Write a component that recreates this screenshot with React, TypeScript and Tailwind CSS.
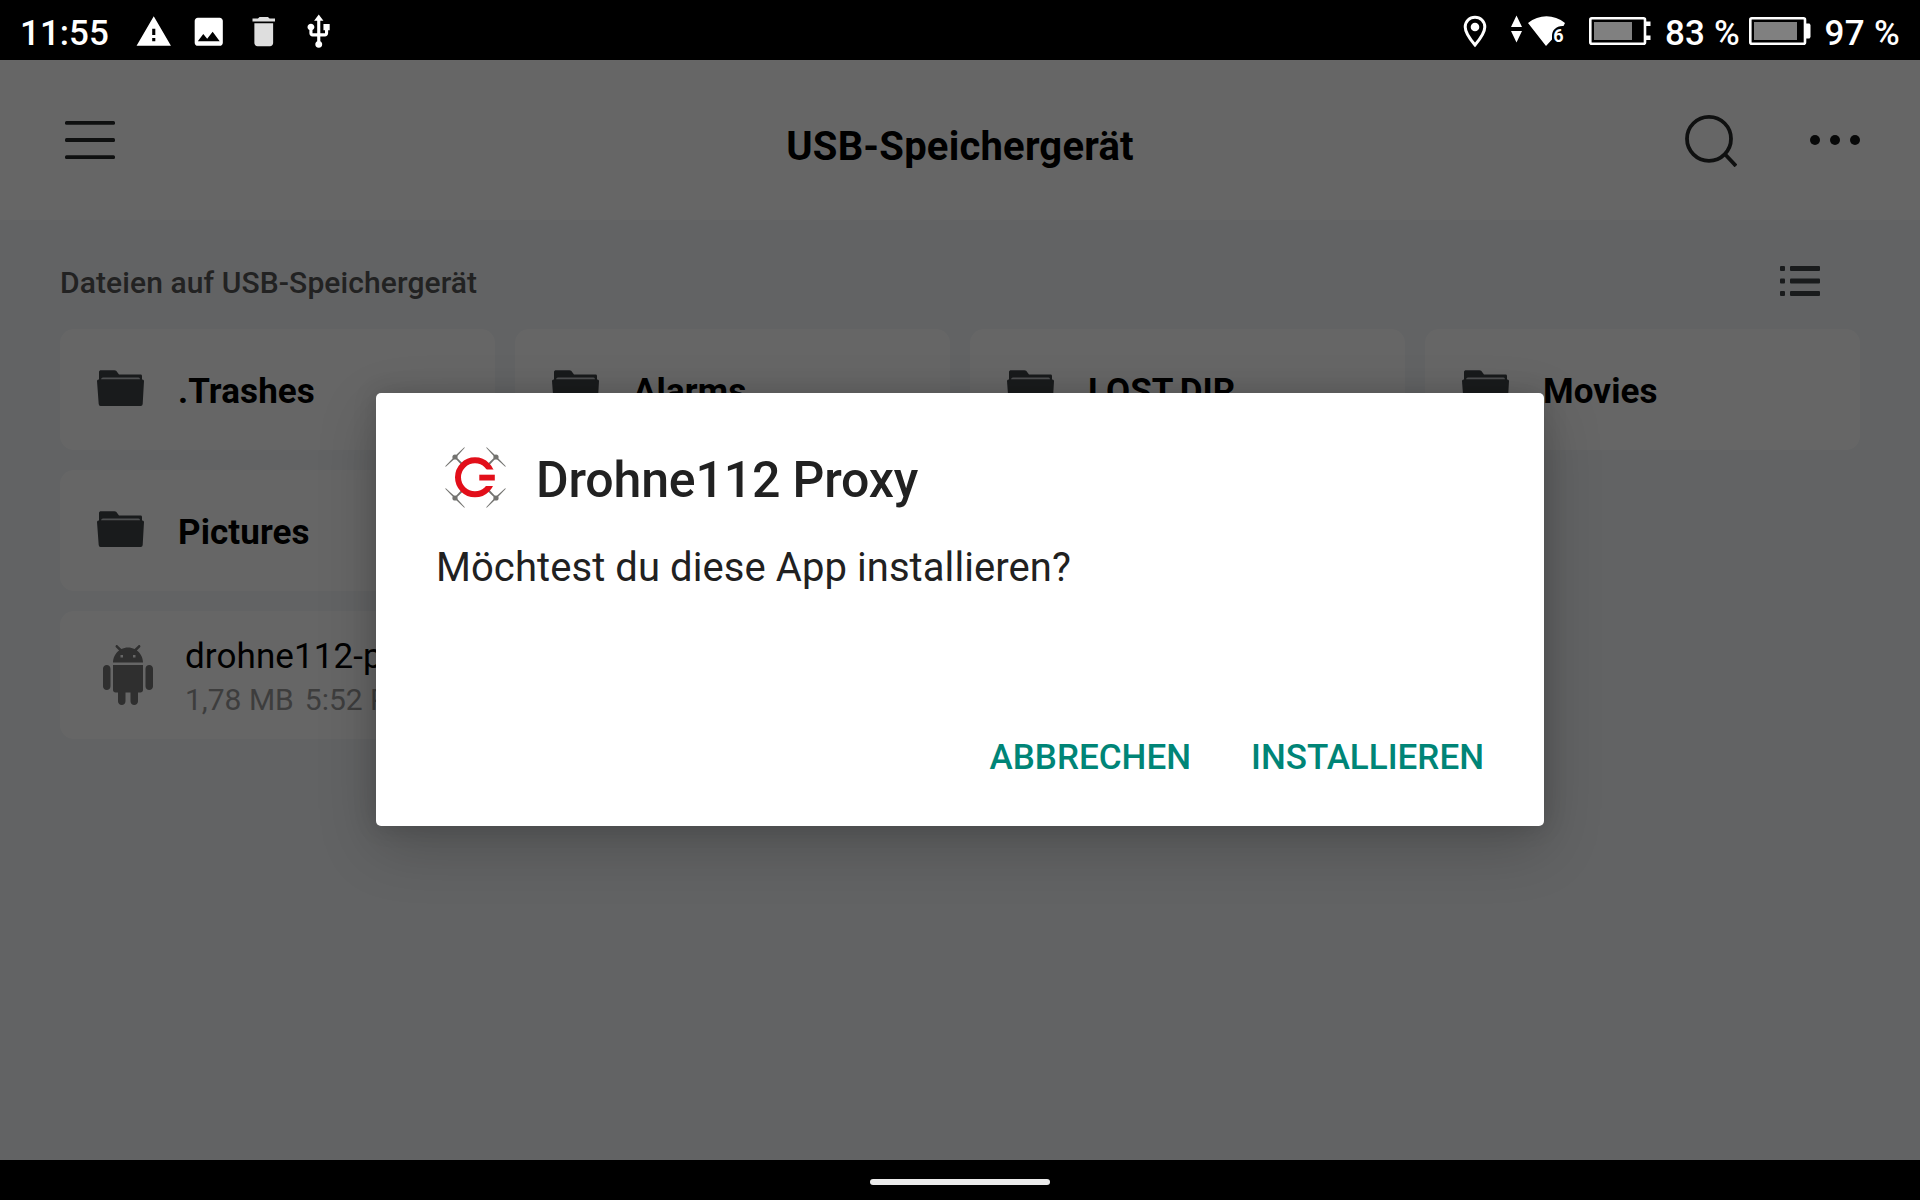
import clsx from 'clsx'
import {MdImage, MdUsb, MdWarning} from 'react-icons/md'

const folders = ['.Trashes', 'Alarms', 'LOST.DIR', 'Movies', 'Pictures']

function StatusBar() {
  return (
    <header className="flex h-[60px] shrink-0 items-start justify-between bg-black pl-5 pr-[19px] text-white">
      <div className="flex items-start">
        <span className="w-[115.4px] text-[35px] font-medium leading-[68px]">11:55</span>
        <div className="flex gap-[17.3px] pt-[12.5px]">
          <MdWarning className="size-[37.5px]" />
          <MdImage className="size-[37.5px]" />
          <svg className="size-[37.5px] text-[#dedede]" viewBox="0 0 24 24" fill="currentColor">
            <path d="M4.800 3.500H8.300l1-.9h5.400l1 .9h3.500v2H4.800zM6 6.500h12v12.700c0 1.100-.9 2-2 2H8c-1.100 0-2-.9-2-2z" />
          </svg>
          <MdUsb className="size-[37.5px]" />
        </div>
      </div>

      <div className="flex items-start">
        {/* Location */}
        <svg className="mr-6 mt-[15px] h-[33px] w-6" viewBox="0 0 24 33" fill="none">
          <path d="M12 2.200C6.500 2.200 2.200 6.500 2.200 12C2.200 18.500 12 30 12 30S21.800 18.500 21.800 12C21.800 6.500 17.500 2.200 12 2.200z" stroke="currentColor" strokeWidth="3" />
          <circle cx="12" cy="12" r="4.300" fill="currentColor" />
        </svg>

        {/* Wi-Fi with traffic arrows */}
        <svg className="mr-6 mt-[15px] h-8 w-[54px]" viewBox="0 0 54 32" fill="currentColor">
          <path d="M5.500 .5L11 12H0zM5.500 27.500L11 16H0z" />
          <path d="M17 8C28 -1 43 -1 54 8L52.500 11C45.500 10.500 41 15 41 21V24.500L35 31z" />
          <text x="42.300" y="26.500" className="text-[18px] font-bold">6</text>
        </svg>

        <svg className="mr-[14px] mt-[17px] h-7 w-[62px]" viewBox="0 0 62 28">
          <rect x="1.300" y="1.300" width="54.700" height="25.400" rx="1.500" fill="none" stroke="white" strokeWidth="2.600" />
          <path d="M57 4.500h4.500v4.500h-4.500zM57 18.500h4.500v4.500h-4.500z" fill="white" />
          <rect x="5" y="5" width="38" height="18" fill="#808080" />
        </svg>
        <span className="mr-[11px] w-[73px] whitespace-nowrap text-[35px] font-medium leading-[68px] tracking-[0.2px]">83 %</span>

        <svg className="mr-[13.5px] mt-[17px] h-7 w-[62px]" viewBox="0 0 62 28">
          <rect x="1.300" y="1.300" width="54.700" height="25.400" rx="1.500" fill="none" stroke="white" strokeWidth="2.600" />
          <path d="M57 6.500h3.500l1 1.500v12l-1 1.500h-3.500z" fill="white" />
          <rect x="5" y="5" width="43" height="18" fill="#808080" />
        </svg>
        <span className="w-[76.5px] whitespace-nowrap text-[35px] font-medium leading-[68px] tracking-[0.3px]">97 %</span>
      </div>
    </header>
  )
}

function TitleBar() {
  return (
    <div className="grid h-40 shrink-0 grid-cols-[1fr_auto_1fr] items-center bg-white px-[60px]">
      <svg className="ml-[5px] h-[38px] w-[50px]" viewBox="0 0 50 38" fill="#262829">
        <rect width="50" height="3.800" rx="1.500" />
        <rect y="17.100" width="50" height="3.800" rx="1.500" />
        <rect y="34.200" width="50" height="3.800" rx="1.500" />
      </svg>
      <h1 className="pt-[13px] text-[40px] font-bold leading-[48px] tracking-[0.2px] text-black">USB-Speichergerät</h1>
      <div className="flex items-center justify-end">
        <svg className="mr-[73px] h-[54px] w-[52px]" viewBox="0 0 52 54" fill="none" stroke="#262829" strokeWidth="3.800">
          <circle cx="24" cy="25.800" r="22" />
          <path d="M39.800 41L51 53" />
        </svg>
        <svg className="h-2.5 w-[50px]" viewBox="0 0 50 10" fill="#161717">
          <circle cx="5" cy="5" r="5" />
          <circle cx="25" cy="5" r="5" />
          <circle cx="45" cy="5" r="5" />
        </svg>
      </div>
    </div>
  )
}

function FolderIcon() {
  return (
    <svg className="mb-[3.5px] h-9 w-[47px] shrink-0" viewBox="0 0 47 36" fill="#404448">
      <path d="M2 10.500V2C2 .9 2.900 .3 4 .3H17.500C19 .3 19.500 1 20.500 2.500L22 4.500H43.500C44.600 4.500 45 5.200 45 6V10.500z" />
      <path d="M4 9.500Q4.300 7.500 6 7.500H41.500Q43 7.500 43 9.500z" fill="#c4c7ca" />
      <path d="M0 11Q0 9.500 1.500 9.500H45.500Q47 9.500 47 11L45.700 34Q45.500 36 43.800 36H3.500Q1.800 36 1.700 34z" />
    </svg>
  )
}

function AndroidIcon() {
  return (
    <svg className="size-[60px] shrink-0" viewBox="0 0 24 24" fill="#757575">
      <path d="M6 18c0 .55.45 1 1 1h1v3.500c0 .83.67 1.500 1.500 1.500s1.500-.67 1.500-1.500V19h2v3.500c0 .83.67 1.500 1.500 1.500s1.500-.67 1.500-1.500V19h1c.55 0 1-.45 1-1V8H6v10zM3.500 8C2.670 8 2 8.670 2 9.500v7c0 .83.67 1.500 1.500 1.500S5 17.330 5 16.500v-7C5 8.670 4.330 8 3.500 8zm17 0c-.83 0-1.500.67-1.500 1.500v7c0 .83.67 1.500 1.500 1.500s1.500-.67 1.500-1.500v-7c0-.83-.67-1.500-1.500-1.500zm-4.970-5.840l1.300-1.300c.2-.2.2-.51 0-.71-.2-.2-.51-.2-.71 0l-1.480 1.480C13.850 1.230 12.950 1 12 1c-.96 0-1.860.23-2.660.63L7.850.15c-.2-.2-.51-.2-.71 0-.2.2-.2.51 0 .71l1.310 1.310C6.970 3.260 6 5.010 6 7h12c0-1.990-.97-3.750-2.470-4.840zM10 5H9V4h1v1zm5 0h-1V4h1v1z" />
    </svg>
  )
}

function FileBrowser() {
  return (
    <section className="grow bg-[#f4f7fa] px-[60px]">
      <div className="flex h-[109px] items-start justify-between pr-10">
        <h2 className="pt-[45px] text-[30px] font-medium leading-[35px] tracking-[0.1px] text-[#555]">Dateien auf USB-Speichergerät</h2>
        <svg className="mt-[46px] h-[30px] w-10" viewBox="0 0 40 30" fill="#404448">
          {[0, 12.4, 25].map((y) => (
            <g key={y}>
              <rect y={y} width="5" height="5" rx="1" />
              <rect x="10" y={y} width="30" height="5" rx="1" />
            </g>
          ))}
        </svg>
      </div>

      <div className="grid grid-cols-4 gap-5">
        {folders.map((name, index) => (
          <div key={name} className={clsx('flex h-[121px] items-center rounded-[14px] bg-white pl-[37px]', index === 4 && 'col-start-1')}>
            <FolderIcon />
            <span className="pl-[34px] pt-[3px] text-[35px] font-bold leading-[41px] tracking-[0.1px] text-black">{name}</span>
          </div>
        ))}
        <div className="col-start-1 flex h-32 items-center rounded-[14px] bg-white pl-[38px]">
          <AndroidIcon />
          <div className="whitespace-nowrap pl-[27px] pt-1">
            <div className="text-[35px] leading-[41px] tracking-[0.1px] text-black">drohne112-proxy.apk</div>
            <div className="pt-[5px] text-[30px] leading-[36px] text-[#999]">
              <span className="mr-[11px]">1,78 MB</span>
              <span>5:52 PM</span>
            </div>
          </div>
        </div>
      </div>
    </section>
  )
}

function DroneLogo() {
  return (
    <svg className="h-[61px] w-[61px]" viewBox="0 0 61 61">
      {['', 'rotate(90 30.500 30.500)', 'rotate(180 30.500 30.500)', 'rotate(270 30.500 30.500)'].map((transform) => (
        <g key={transform} transform={transform} fill="#737370">
          <path d="M.2 19.300L9.500 9.500L19.300 .2L19.800 .8L10.800 10.800L.8 19.800z" />
          <circle cx="10" cy="10" r="2.600" />
          <path d="M9.400 10.600L10.600 9.400L18.500 17L17 18.500z" />
        </g>
      ))}
      <circle cx="30" cy="30.300" r="17" fill="white" stroke="#e20f1a" strokeWidth="6" />
      <rect x="38" y="22.500" width="14" height="16.500" fill="white" />
      <rect x="34.300" y="27.700" width="15.500" height="5.800" fill="#e20f1a" />
    </svg>
  )
}

function InstallDialog() {
  return (
    <div className="flex h-[433px] w-[1168px] flex-col rounded-[5px] bg-white px-[60px] shadow-[0_20px_60px_rgba(0,0,0,0.2),0_0_24px_rgba(0,0,0,0.14)]">
      <div className="flex items-center pl-[9px] pt-[54px]">
        <DroneLogo />
        <h2 className="pl-[30px] pt-[5px] text-[50px] font-medium leading-[56px] tracking-[-0.17px] text-[#212121]">Drohne112 Proxy</h2>
      </div>
      <p className="pt-[36px] text-[40px] leading-[48px] tracking-[0.07px] text-[#212121]">Möchtest du diese App installieren?</p>
      <div className="mt-auto flex justify-end gap-[60px] pb-[48px] text-[35px] font-medium leading-[41px] text-[#008577]">
        <button>ABBRECHEN</button>
        <button>INSTALLIEREN</button>
      </div>
    </div>
  )
}

export default function App() {
  return (
    <div className="flex h-[1200px] w-[1920px] flex-col overflow-hidden bg-black font-['Roboto',sans-serif]">
      <StatusBar />
      <main className="relative flex grow flex-col">
        <TitleBar />
        <FileBrowser />

        {/* Scrim */}
        <div className="absolute inset-0 flex items-start justify-center overflow-hidden bg-black/60 pt-[333px]">
          <InstallDialog />
        </div>
      </main>
      <footer className="flex h-10 shrink-0 justify-center bg-black pt-[19px]">
        <div className="h-1.5 w-[180px] rounded-full bg-[#ebebeb]" />
      </footer>
    </div>
  )
}
